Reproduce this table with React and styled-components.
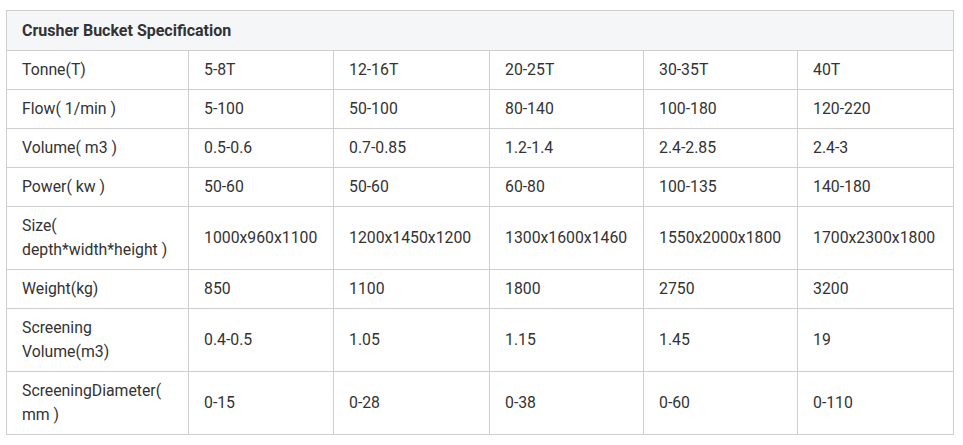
import React from "react";
import styled, { createGlobalStyle } from "styled-components";

const GlobalStyle = createGlobalStyle`
  body {
    margin: 0;
    background: #fff;
    font-family: Roboto, "Liberation Sans", sans-serif;
  }
`;

const Wrap = styled.div`
  padding: 10px 0 0 6px;
`;

const Table = styled.table`
  width: 947px;
  border-collapse: collapse;
  table-layout: fixed;
  color: #333;
  font-size: 15.8px;
  line-height: 24px;
`;

const HeadCell = styled.th`
  background: #f5f6f8;
  border: 1px solid #cfcfcf;
  text-align: left;
  font-weight: 700;
  font-size: 16px;
  padding: 8px 15px;
  height: 23px;
  line-height: 23px;
`;

const Cell = styled.td`
  border: 1px solid #cfcfcf;
  padding: 7px 15px;
  vertical-align: middle;
`;

const widths = [182, 145, 156, 154, 154, 156];

const rows = [
  ["Tonne(T)", "5-8T", "12-16T", "20-25T", "30-35T", "40T"],
  ["Flow( 1/min )", "5-100", "50-100", "80-140", "100-180", "120-220"],
  ["Volume( m3 )", "0.5-0.6", "0.7-0.85", "1.2-1.4", "2.4-2.85", "2.4-3"],
  ["Power( kw )", "50-60", "50-60", "60-80", "100-135", "140-180"],
  ["Size( depth*width*height )", "1000x960x1100", "1200x1450x1200", "1300x1600x1460", "1550x2000x1800", "1700x2300x1800"],
  ["Weight(kg)", "850", "1100", "1800", "2750", "3200"],
  ["Screening Volume(m3)", "0.4-0.5", "1.05", "1.15", "1.45", "19"],
  ["ScreeningDiameter( mm )", "0-15", "0-28", "0-38", "0-60", "0-110"],
];

export default function App() {
  return (
    <Wrap>
      <GlobalStyle />
      <Table>
        <colgroup>
          {widths.map((w, i) => <col key={i} style={{ width: w }} />)}
        </colgroup>
        <thead>
          <tr>
            <HeadCell colSpan={6}>Crusher Bucket Specification</HeadCell>
          </tr>
        </thead>
        <tbody>
          {rows.map((r, i) => (
            <tr key={i}>
              {r.map((c, j) => <Cell key={j}>{c}</Cell>)}
            </tr>
          ))}
        </tbody>
      </Table>
    </Wrap>
  );
}
